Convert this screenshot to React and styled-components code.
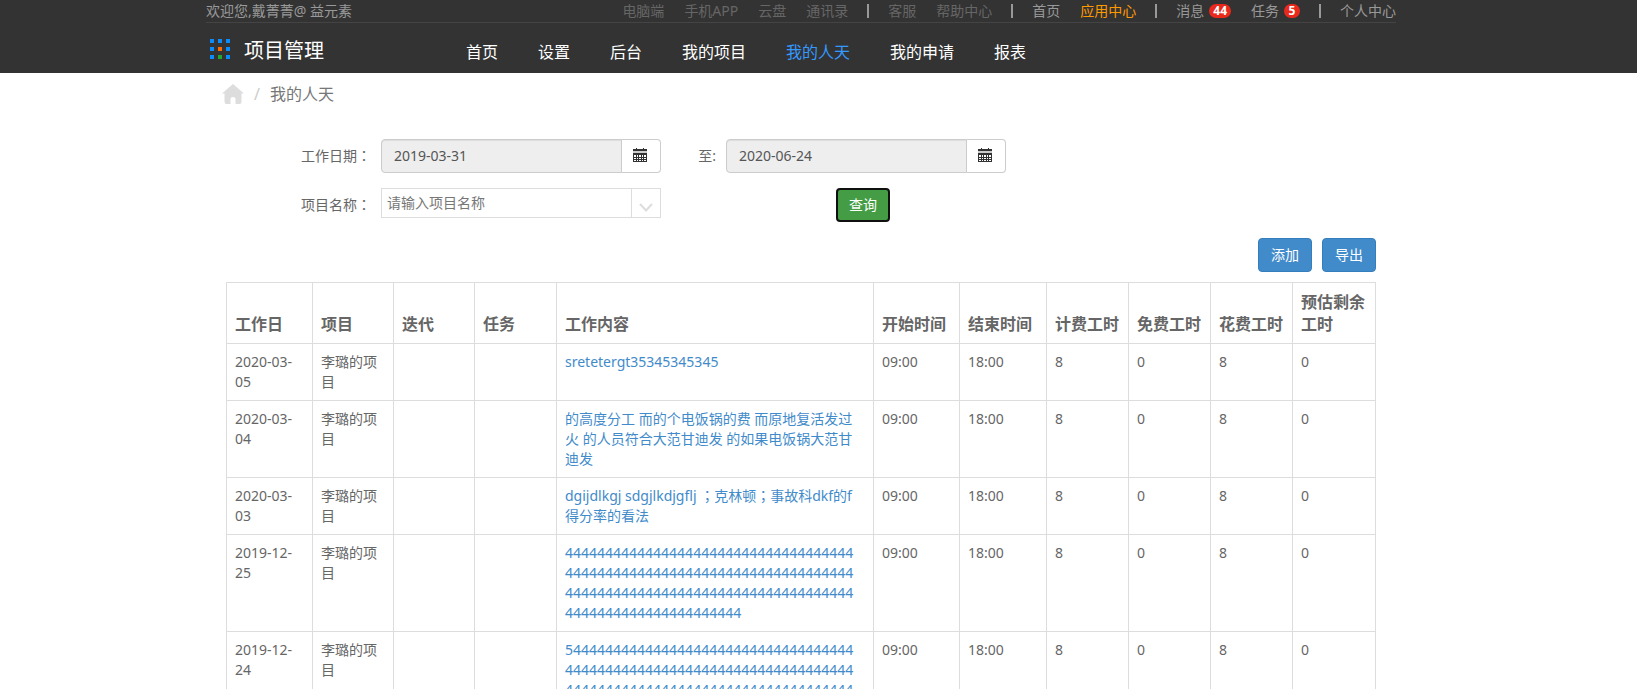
import React, { useState } from 'react';

import styled, { createGlobalStyle } from 'styled-components';

const GlobalStyle = createGlobalStyle`
  * {
    box-sizing: border-box;
  }

  body {
    margin: 0;
    background: #fff;
    color: #666;
    font-family: 'Noto Sans', 'Noto Sans CJK SC', sans-serif;
    font-size: 14px;
    line-height: 20px;
  }

  a {
    text-decoration: none;
  }

  button,
  input {
    font: inherit;
  }
`;

const Header = styled.header`
  background: #333;
  padding-right: 35px;
`;

const HeaderInner = styled.div`
  max-width: 1190px;
  margin: 0 auto;
`;

const TopBar = styled.div`
  display: flex;
  justify-content: space-between;
  align-items: center;
  height: 23px;
  border-bottom: 1px solid #444;
  color: #999;
`;

const TopLinks = styled.nav`
  display: flex;
  align-items: center;
`;

const TopLink = styled.a`
  display: flex;
  align-items: center;
  gap: 5px;
  padding: 0 10px;
  color: ${({ $tone }) => $tone || '#999'};

  &:last-child {
    padding-right: 0;
  }
`;

const Separator = styled.span`
  width: 2px;
  height: 14px;
  margin: 0 9px;
  background: #999;
`;

const Badge = styled.span`
  min-width: 16px;
  height: 14px;
  padding: 0 4px;
  border-radius: 7px;
  background: #e8291c;
  color: #fff;
  font-size: 12px;
  font-weight: bold;
  line-height: 14px;
  text-align: center;
`;

const MainBar = styled.div`
  display: flex;
  align-items: center;
  height: 50px;
`;

const Brand = styled.a`
  display: flex;
  align-items: center;
  gap: 14px;
  width: 260px;
  padding: 2px 0 0 4px;
  color: #fff;
  font-size: 20px;
`;

const BrandName = styled.span`
  padding-top: 4px;
`;

const NavLinks = styled.nav`
  display: flex;
  gap: 40px;
  padding-top: 8px;
`;

const NavLink = styled.a`
  color: ${({ $active }) => ($active ? '#3399ff' : '#fff')};
  font-size: 16px;
`;

const Page = styled.div`
  padding-right: 35px;
`;

const Content = styled.main`
  max-width: 1150px;
  margin: 0 auto;
`;

const Breadcrumb = styled.nav`
  display: flex;
  align-items: center;
  height: 42px;
  font-size: 16px;
  color: #777;

  a {
    display: flex;
    margin-left: -4px;
  }
`;

const Slash = styled.span`
  padding: 0 10px;
  color: #ccc;
`;

const SearchForm = styled.form`
  display: grid;
  grid-template-columns: 80px 280px 65px 280px;
  row-gap: 15px;
  padding: 24px 0 0 75px;
`;

const Label = styled.label`
  align-self: center;
  text-align: ${({ $right }) => ($right ? 'right' : 'left')};
  padding-right: ${({ $right }) => ($right ? '10px' : '0')};
`;

// the TC face centres full-width punctuation in its box
const Punctuation = styled.span`
  font-family: 'Noto Sans CJK TC', sans-serif;
  line-height: 1;
`;

const DateGroup = styled.div`
  display: flex;
  height: 34px;
`;

const DateInput = styled.input`
  flex: 1;
  min-width: 0;
  padding: 0 12px;
  border: 1px solid #ccc;
  border-radius: 4px 0 0 4px;
  background: #eee;
  box-shadow: inset 0 1px 1px rgba(0, 0, 0, 0.075);
  color: #555;
`;

const DateButton = styled.button`
  display: flex;
  justify-content: center;
  align-items: center;
  width: 39px;
  padding: 0 2px 2px 0;
  border: 1px solid #ccc;
  border-left: 0;
  border-radius: 0 4px 4px 0;
  background: #fff;
  color: #333;
`;

const Combo = styled.div`
  display: flex;
  height: 30px;
  border: 1px solid #ddd;
`;

const ComboInput = styled.input`
  flex: 1;
  min-width: 0;
  padding: 0 5px;
  border: 0;
  background: #fff;
  color: #555;

  &::placeholder {
    color: #777;
    opacity: 1;
  }
`;

const ComboToggle = styled.button`
  display: flex;
  justify-content: center;
  align-items: center;
  width: 29px;
  padding: 8px 0 0;
  border: 0;
  border-left: 1px solid #ddd;
  background: #fff;
`;

const Button = styled.button`
  height: 34px;
  padding: 0 11px;
  border: 1px solid #357ebd;
  border-radius: 4px;
  background: #428bca;
  color: #fff;
  min-width: 54px;
`;

const SearchButton = styled(Button)`
  grid-column: 4;
  justify-self: start;
  margin-left: 110px;
  padding: 0 10px;
  border: 2px solid #101010;
  background: #449d44;
`;

const Actions = styled.div`
  display: flex;
  justify-content: flex-end;
  gap: 10px;
  padding: 16px 0 10px;
`;

const Table = styled.table`
  width: 100%;
  table-layout: fixed;
  border-collapse: collapse;
`;

const HeadCell = styled.th`
  width: ${({ $width }) => ($width ? `${$width}px` : 'auto')};
  padding: 8px;
  border: 1px solid #ddd;
  font-size: 16px;
  font-weight: bold;
  line-height: 22px;
  text-align: left;
  vertical-align: bottom;
`;

const Cell = styled.td`
  padding: 8px;
  border: 1px solid #ddd;
  vertical-align: top;
  overflow-wrap: break-word;
`;

const WorkCell = styled(Cell)`
  padding-right: 15px;

  a {
    color: #428bca;
  }
`;

const columns = [
  { title: '工作日', width: 86 },
  { title: '项目', width: 81 },
  { title: '迭代', width: 81 },
  { title: '任务', width: 82 },
  { title: '工作内容' },
  { title: '开始时间', width: 86 },
  { title: '结束时间', width: 87 },
  { title: '计费工时', width: 82 },
  { title: '免费工时', width: 82 },
  { title: '花费工时', width: 82 },
  { title: '预估剩余工时', width: 83 },
];

const rows = [
  { date: '2020-03-05', content: 'sretetergt35345345345' },
  {
    date: '2020-03-04',
    content: '的高度分工 而的个电饭锅的费 而原地复活发过火 的人员符合大范甘迪发 的如果电饭锅大范甘迪发',
  },
  {
    date: '2020-03-03',
    content: (
      <>
        dgijdlkgj sdgjlkdjgflj <Punctuation>；</Punctuation>克林顿<Punctuation>；</Punctuation>
        事故科dkf的f得分率的看法
      </>
    ),
  },
  { date: '2019-12-25', content: '4'.repeat(130) },
  { date: '2019-12-24', content: `5${'4'.repeat(129)}` },
];

const navItems = ['首页', '设置', '后台', '我的项目', '我的人天', '我的申请', '报表'];

const LogoIcon = () => (
  <svg width="20" height="20" viewBox="0 0 20 20" aria-hidden="true">
    {[0, 8, 16].map((y) =>
      [0, 8, 16].map((x) => {
        let fill = '#0a8cff';
        if (x === 8 && y === 8) fill = '#ff6a00';
        if (x === 8 && y === 16) fill = '#22a82c';
        return <rect key={`${x}-${y}`} x={x} y={y} width="4" height="4" fill={fill} />;
      }),
    )}
  </svg>
);

const HomeIcon = () => (
  <svg width="22" height="20" viewBox="0 0 22 20" fill="#ddd" aria-hidden="true">
    <path d="M11 0 L22 9.5 H19.5 V18 Q19.5 20 17.5 20 H13.5 V15 Q13.5 13 11 13 Q8.5 13 8.5 15 V20 H4.5 Q2.5 20 2.5 18 V9.5 H0 Z" />
  </svg>
);

const CalendarIcon = () => (
  <svg width="14" height="14" viewBox="0 0 14 14" fill="currentColor" aria-hidden="true">
    <path d="M0 1 H3 V0 H4 V1 H10 V0 H11 V1 H14 V3 H0 Z" />
    <path d="M0 3 H14 V5 H0 Z" fill="#ccc" />
    <path
      fillRule="evenodd"
      d="M0 5 H14 V14 H0 Z M1 7 V9 H3 V7 Z M4 7 V9 H5 V7 Z M6 7 V9 H8 V7 Z M9 7 V9 H10 V7 Z M11 7 V9 H13 V7 Z M1 10 V11 H3 V10 Z M4 10 V11 H5 V10 Z M6 10 V11 H8 V10 Z M9 10 V11 H10 V10 Z M11 10 V11 H13 V10 Z M1 12 V13 H3 V12 Z M4 12 V13 H5 V12 Z M6 12 V13 H8 V12 Z M9 12 V13 H10 V12 Z M11 12 V13 H13 V12 Z"
    />
  </svg>
);

const ChevronIcon = () => (
  <svg width="14" height="9" viewBox="0 0 14 9" fill="none" stroke="#ddd" strokeWidth="2" aria-hidden="true">
    <path d="M1 1 L7 7.5 L13 1" />
  </svg>
);

const DateField = ({ id, value }) => (
  <DateGroup>
    <DateInput id={id} type="text" value={value} readOnly />
    <DateButton type="button" aria-label="选择日期">
      <CalendarIcon />
    </DateButton>
  </DateGroup>
);

const App = () => {
  const [project, setProject] = useState('');

  return (
    <>
      <GlobalStyle />
      <Header>
        <HeaderInner>
          <TopBar>
            <span>欢迎您,戴菁菁@ 益元素</span>
            <TopLinks>
              <TopLink href="#" $tone="#666">电脑端</TopLink>
              <TopLink href="#" $tone="#666">手机APP</TopLink>
              <TopLink href="#" $tone="#666">云盘</TopLink>
              <TopLink href="#" $tone="#666">通讯录</TopLink>
              <Separator />
              <TopLink href="#" $tone="#666">客服</TopLink>
              <TopLink href="#" $tone="#666">帮助中心</TopLink>
              <Separator />
              <TopLink href="#">首页</TopLink>
              <TopLink href="#" $tone="#ff9900">应用中心</TopLink>
              <Separator />
              <TopLink href="#">
                消息<Badge>44</Badge>
              </TopLink>
              <TopLink href="#">
                任务<Badge>5</Badge>
              </TopLink>
              <Separator />
              <TopLink href="#">个人中心</TopLink>
            </TopLinks>
          </TopBar>
          <MainBar>
            <Brand href="#">
              <LogoIcon />
              <BrandName>项目管理</BrandName>
            </Brand>
            <NavLinks>
              {navItems.map((item) => (
                <NavLink key={item} href="#" $active={item === '我的人天'}>
                  {item}
                </NavLink>
              ))}
            </NavLinks>
          </MainBar>
        </HeaderInner>
      </Header>

      <Page>
        <Content>
          <Breadcrumb>
            <a href="#" aria-label="首页">
              <HomeIcon />
            </a>
            <Slash>/</Slash>
            <span>我的人天</span>
          </Breadcrumb>

          <SearchForm onSubmit={(e) => e.preventDefault()}>
            <Label htmlFor="start">
              工作日期<Punctuation>：</Punctuation>
            </Label>
            <DateField id="start" value="2019-03-31" />
            <Label htmlFor="end" $right>至:</Label>
            <DateField id="end" value="2020-06-24" />

            <Label htmlFor="project">
              项目名称<Punctuation>：</Punctuation>
            </Label>
            <Combo>
              <ComboInput
                id="project"
                type="text"
                placeholder="请输入项目名称"
                value={project}
                onChange={(e) => setProject(e.target.value)}
              />
              <ComboToggle type="button" aria-label="展开">
                <ChevronIcon />
              </ComboToggle>
            </Combo>
            <SearchButton type="submit">查询</SearchButton>
          </SearchForm>

          <Actions>
            <Button type="button">添加</Button>
            <Button type="button">导出</Button>
          </Actions>

          <Table>
            <thead>
              <tr>
                {columns.map(({ title, width }) => (
                  <HeadCell key={title} $width={width}>
                    {title}
                  </HeadCell>
                ))}
              </tr>
            </thead>
            <tbody>
              {rows.map(({ date, content }) => (
                <tr key={date}>
                  <Cell>{date}</Cell>
                  <Cell>李璐的项目</Cell>
                  <Cell />
                  <Cell />
                  <WorkCell>
                    <a href="#">{content}</a>
                  </WorkCell>
                  <Cell>09:00</Cell>
                  <Cell>18:00</Cell>
                  <Cell>8</Cell>
                  <Cell>0</Cell>
                  <Cell>8</Cell>
                  <Cell>0</Cell>
                </tr>
              ))}
            </tbody>
          </Table>
        </Content>
      </Page>
    </>
  );
};

export default App;
